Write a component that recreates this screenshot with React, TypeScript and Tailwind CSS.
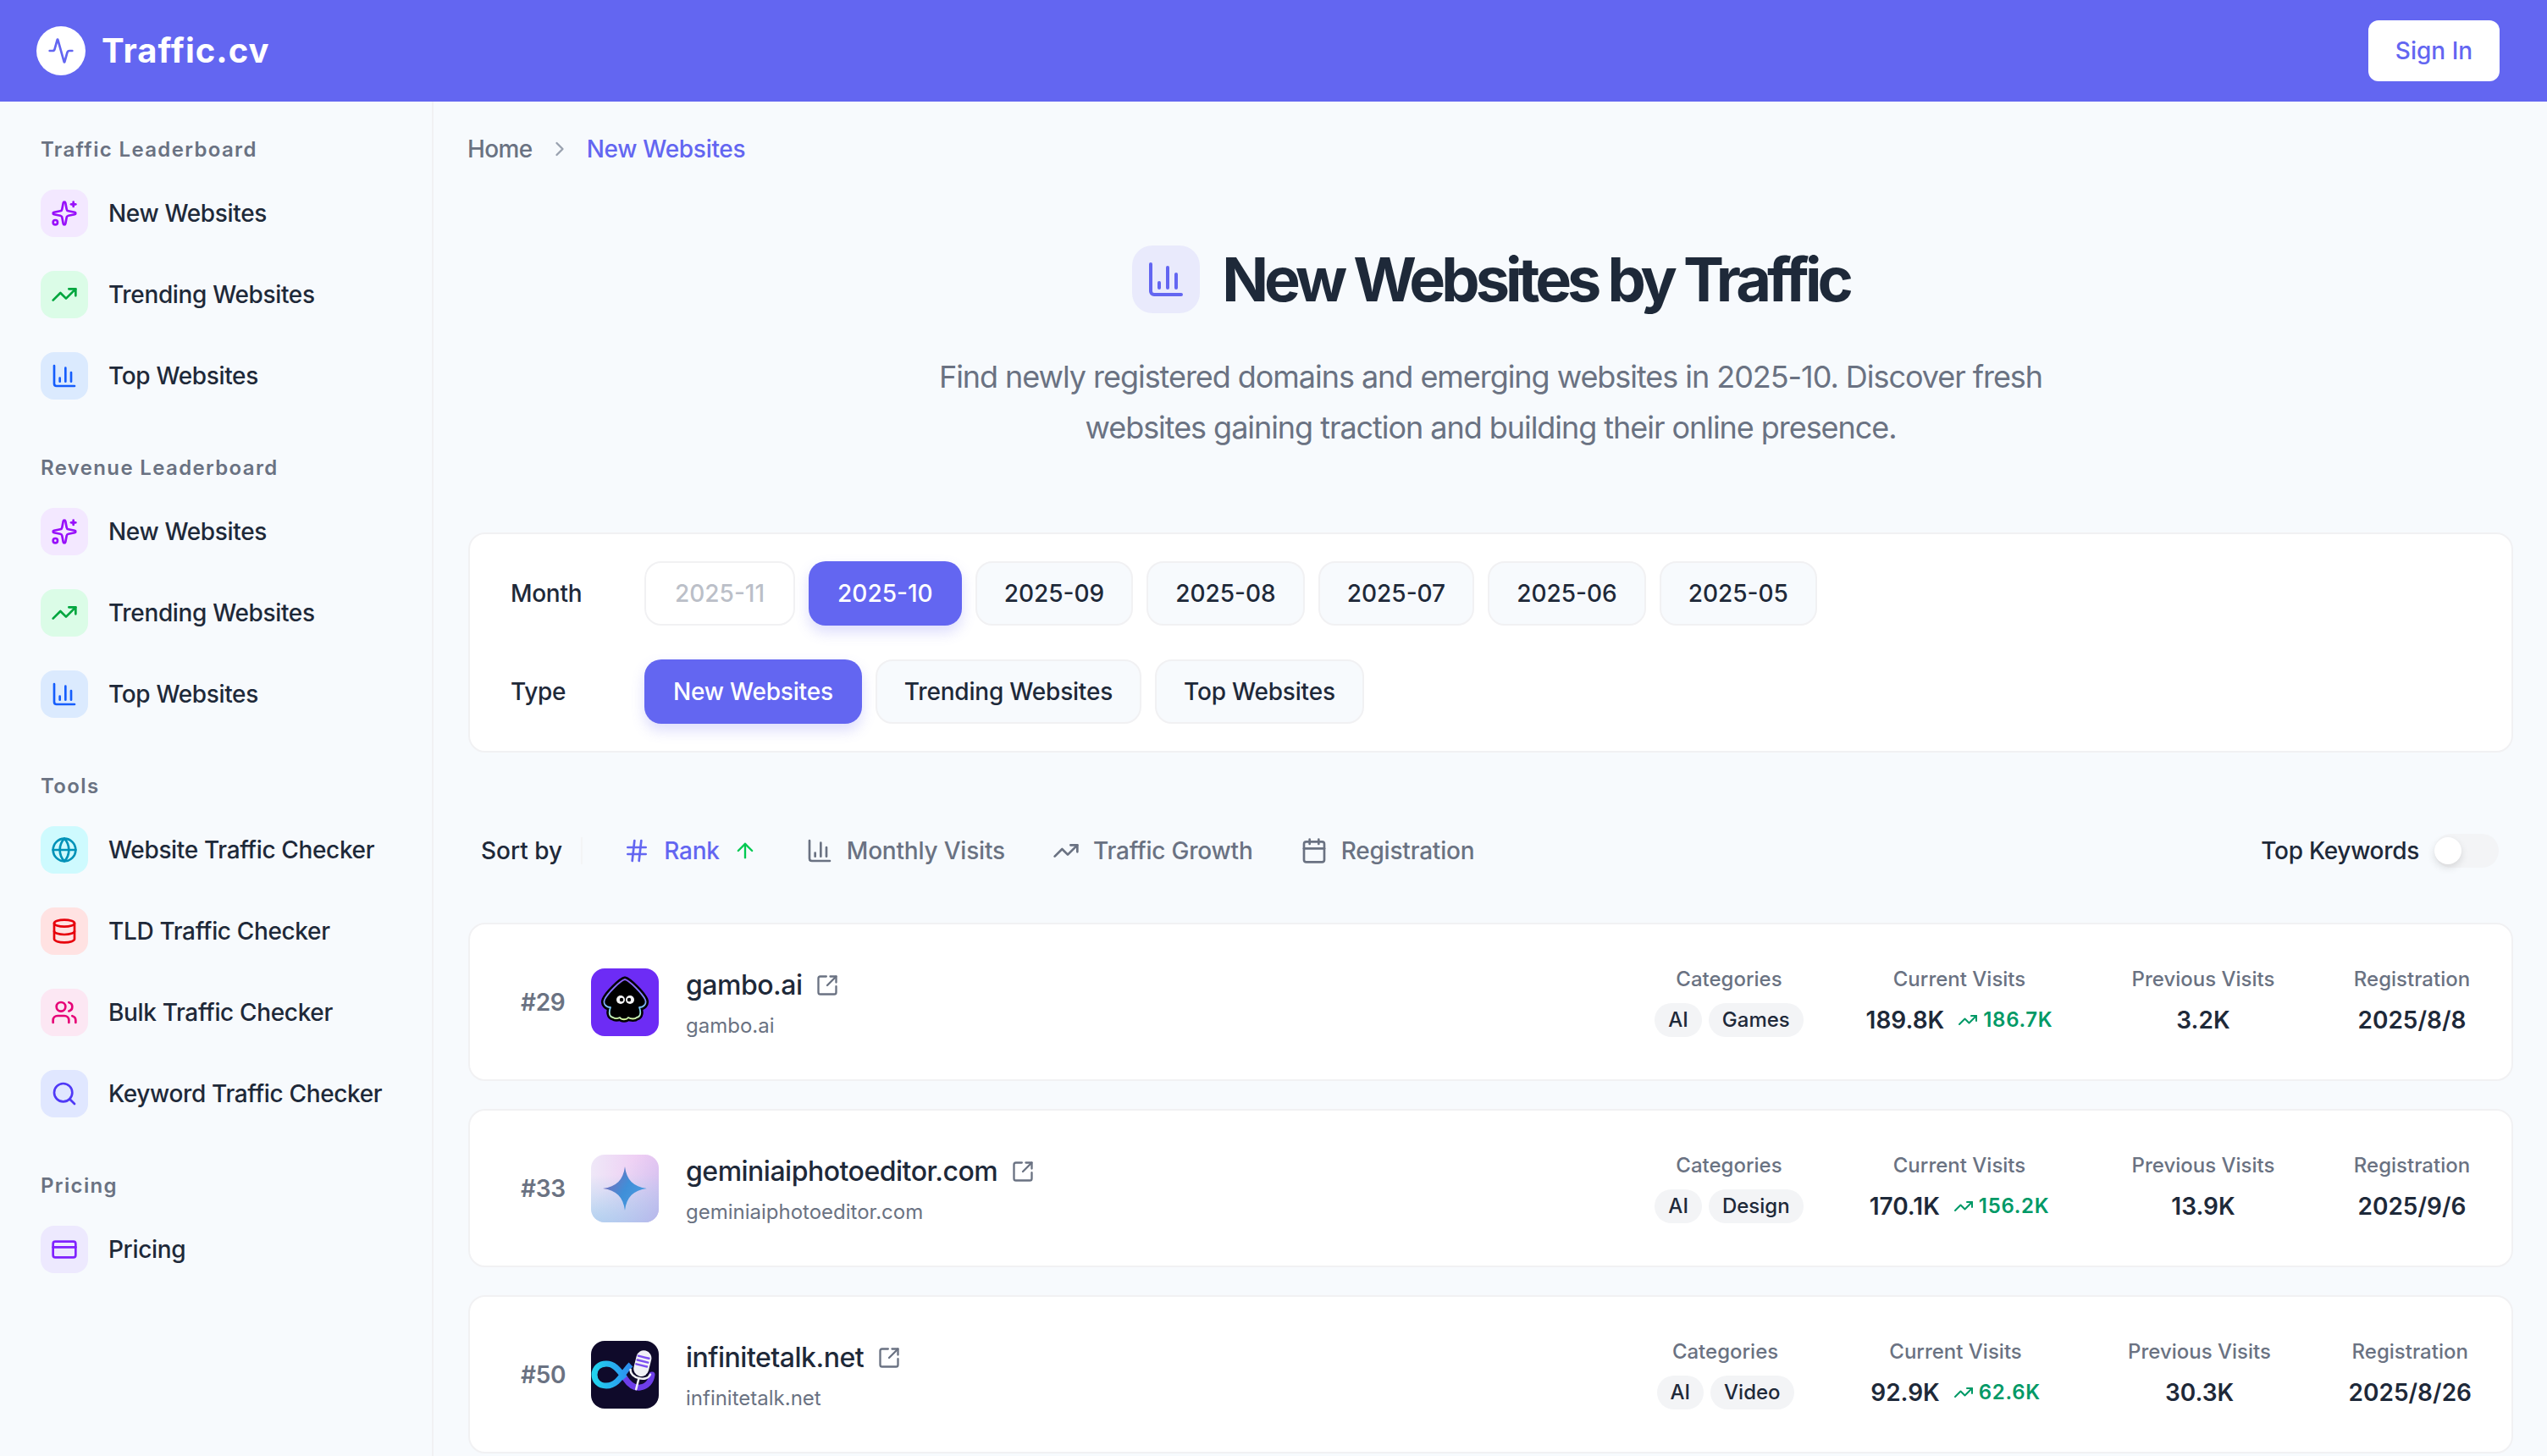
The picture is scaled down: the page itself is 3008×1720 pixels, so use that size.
import {
  Activity,
  ArrowUp,
  Calendar,
  ChartColumn,
  ChevronRight,
  CreditCard,
  Database,
  Globe,
  Hash,
  Search,
  Sparkles,
  SquareArrowOutUpRight,
  TrendingUp,
  Users,
} from "lucide-react";
import React from "react";

const sidebarSections = [
  {
    title: "Traffic Leaderboard",
    items: [
      { label: "New Websites", icon: Sparkles, box: "bg-purple-100", color: "text-purple-600" },
      { label: "Trending Websites", icon: TrendingUp, box: "bg-green-100", color: "text-green-600" },
      { label: "Top Websites", icon: ChartColumn, box: "bg-blue-100", color: "text-blue-600" },
    ],
  },
  {
    title: "Revenue Leaderboard",
    items: [
      { label: "New Websites", icon: Sparkles, box: "bg-purple-100", color: "text-purple-600" },
      { label: "Trending Websites", icon: TrendingUp, box: "bg-green-100", color: "text-green-600" },
      { label: "Top Websites", icon: ChartColumn, box: "bg-blue-100", color: "text-blue-600" },
    ],
  },
  {
    title: "Tools",
    items: [
      { label: "Website Traffic Checker", icon: Globe, box: "bg-cyan-100", color: "text-cyan-600" },
      { label: "TLD Traffic Checker", icon: Database, box: "bg-red-100", color: "text-red-600" },
      { label: "Bulk Traffic Checker", icon: Users, box: "bg-pink-100", color: "text-pink-600" },
      { label: "Keyword Traffic Checker", icon: Search, box: "bg-indigo-100", color: "text-indigo-600" },
    ],
  },
  {
    title: "Pricing",
    items: [{ label: "Pricing", icon: CreditCard, box: "bg-violet-100", color: "text-violet-600" }],
  },
];

const months = ["2025-11", "2025-10", "2025-09", "2025-08", "2025-07", "2025-06", "2025-05"];
const types = ["New Websites", "Trending Websites", "Top Websites"];

const squidPath =
  "M40 13C35 14 19 30 16 37C14 42 18 46 23 46C21 51 21 57 26 58C29 60 32 59 34 58C36 61 42 61 44 58C47 60 52 60 54 58C59 57 59 51 57 46C62 46 66 42 64 37C61 30 45 14 40 13Z";

const GamboLogo = () => (
  <svg viewBox="0 0 80 80" className="h-full w-full">
    <defs>
      <linearGradient id="gamboEdge" x1="0" y1="0" x2="0" y2="1">
        <stop offset="0" stopColor="#8b5cf6" />
        <stop offset="0.5" stopColor="#818cf8" />
        <stop offset="0.75" stopColor="#7dd3fc" />
        <stop offset="1" stopColor="#d9f99d" />
      </linearGradient>
    </defs>
    <rect width="80" height="80" fill="#6d2cf5" />
    <path d={squidPath} fill="#000" stroke="#000" strokeWidth="7" strokeLinejoin="round" />
    <path d={squidPath} fill="#000" stroke="url(#gamboEdge)" strokeWidth="1.8" strokeLinejoin="round" />
    <circle cx="35" cy="37" r="5" fill="#f4f4f5" />
    <circle cx="46" cy="37" r="5" fill="#f4f4f5" />
    <circle cx="36" cy="37" r="2.2" fill="#000" />
    <circle cx="45" cy="37" r="2.2" fill="#000" />
  </svg>
);

const GeminiLogo = () => (
  <svg viewBox="0 0 80 80" className="h-full w-full">
    <defs>
      <linearGradient id="geminiBg" x1="0" y1="0" x2="1" y2="0">
        <stop offset="0" stopColor="#efe8f8" />
        <stop offset="1" stopColor="#eec3f2" />
      </linearGradient>
      <linearGradient id="geminiFade" x1="0" y1="0" x2="1" y2="1">
        <stop offset="0.35" stopColor="#b5d3f0" stopOpacity="0" />
        <stop offset="1" stopColor="#b8aeea" stopOpacity="0.8" />
      </linearGradient>
      <linearGradient id="geminiLow" x1="0" y1="0" x2="0" y2="1">
        <stop offset="0.3" stopColor="#b4d3f0" stopOpacity="0" />
        <stop offset="1" stopColor="#b4d3f0" stopOpacity="1" />
      </linearGradient>
      <linearGradient id="geminiStar" x1="0" y1="0" x2="1" y2="0.6">
        <stop offset="0" stopColor="#8e62b0" />
        <stop offset="0.6" stopColor="#3f8fd8" />
        <stop offset="1" stopColor="#4a9be0" />
      </linearGradient>
    </defs>
    <rect width="80" height="80" fill="url(#geminiBg)" />
    <rect width="80" height="80" fill="url(#geminiLow)" />
    <rect width="80" height="80" fill="url(#geminiFade)" />
    <path
      d="M40 14C42 30 50 38 66 40C50 42 42 50 40 66C38 50 30 42 14 40C30 38 38 30 40 14Z"
      fill="url(#geminiStar)"
    />
  </svg>
);

const InfiniteTalkLogo = () => (
  <svg viewBox="0 0 80 80" className="h-full w-full">
    <defs>
      <linearGradient id="talkLoop" x1="0" y1="0" x2="1" y2="0">
        <stop offset="0" stopColor="#22d3ee" />
        <stop offset="1" stopColor="#2d8cf0" />
      </linearGradient>
    </defs>
    <rect width="80" height="80" fill="#0f0a2a" />
    <path
      d="M40 44C46 53 52 56 58 55C66 54 71 48 72 40"
      fill="none"
      stroke="#6d3ee8"
      strokeWidth="7"
      strokeLinecap="round"
    />
    <path
      d="M47 28C38 36 33 53 18 53C9 53 4 47 4 40C4 32 10 27 18 27C28 27 33 35 40 44"
      fill="none"
      stroke="url(#talkLoop)"
      strokeWidth="7"
    />
    <g transform="rotate(14 60 30)">
      <path d="M48 37C49 47 71 47 72 37" fill="none" stroke="#f1f1f6" strokeWidth="2.5" strokeLinecap="round" />
      <path d="M60 45V58" stroke="#f1f1f6" strokeWidth="2.5" strokeLinecap="round" />
      <rect x="51" y="11" width="18" height="31" rx="9" fill="#f1f1f6" />
      <path d="M53 19H66M53 24H66M53 29H66" stroke="#7c4ff0" strokeWidth="2.4" strokeLinecap="round" />
    </g>
  </svg>
);

const sites = [
  {
    rank: "#29",
    name: "gambo.ai",
    logo: <GamboLogo />,
    tags: ["AI", "Games"],
    current: "189.8K",
    growth: "186.7K",
    previous: "3.2K",
    registered: "2025/8/8",
  },
  {
    rank: "#33",
    name: "geminiaiphotoeditor.com",
    logo: <GeminiLogo />,
    tags: ["AI", "Design"],
    current: "170.1K",
    growth: "156.2K",
    previous: "13.9K",
    registered: "2025/9/6",
  },
  {
    rank: "#50",
    name: "infinitetalk.net",
    logo: <InfiniteTalkLogo />,
    tags: ["AI", "Video"],
    current: "92.9K",
    growth: "62.6K",
    previous: "30.3K",
    registered: "2025/8/26",
  },
];

const Sidebar = () => (
  <aside className="flex w-[512px] shrink-0 flex-col border-r-2 border-[#f1f1f3] pl-12 pt-[41px]">
    {sidebarSections.map((section) => (
      <div key={section.title} className="mb-[45px] flex flex-col">
        <h3 className="mb-[11px] h-[32px] text-[24px] font-semibold leading-[32px] tracking-[1.35px] text-gray-500">
          {section.title}
        </h3>
        {section.items.map((item) => (
          <div
            key={item.label}
            className="flex h-[96px] items-center gap-[24px] text-[28px] font-medium tracking-[-0.35px] text-gray-800"
          >
            <span className={`flex h-14 w-14 items-center justify-center rounded-2xl ${item.box}`}>
              <item.icon className={`h-8 w-8 ${item.color}`} />
            </span>
            {item.label}
          </div>
        ))}
      </div>
    ))}
  </aside>
);

const FilterButton = ({ label, active, disabled }: { label: string; active?: boolean; disabled?: boolean }) => {
  let tone = "border-2 border-[#f1f1f3] bg-[#f7fafd] px-[32px] text-gray-800";
  if (active) tone = "bg-[#6366f1] px-[34px] text-white shadow-[0_8px_16px_rgba(99,102,241,0.22)]";
  if (disabled) tone = "border-2 border-[#f1f1f3] bg-white px-[34px] text-[#bbbfc8]";
  return <span className={`flex h-[76px] items-center rounded-[20px] text-[28px] font-medium ${tone}`}>{label}</span>;
};

const SortOption = ({ icon: Icon, label, active }: { icon: typeof Hash; label: string; active?: boolean }) => (
  <span
    className={`flex items-center gap-4 px-[28px] text-[28px] font-medium tracking-[-0.2px] ${
      active ? "text-[#6366f1]" : "text-gray-500"
    }`}
  >
    <Icon className="h-8 w-8" />
    {label}
    {active && <ArrowUp className="mr-[2px] h-7 w-7 text-green-500" />}
  </span>
);

const Stat = ({ label, width, children }: { label: string; width: string; children: React.ReactNode }) => (
  <div className={`flex flex-col items-center gap-[10px] ${width}`}>
    <span className="whitespace-nowrap text-[24px] font-medium leading-[36px] text-gray-500">{label}</span>
    <div className="flex h-[40px] items-center gap-2 whitespace-nowrap text-[28px] font-semibold text-gray-800">
      {children}
    </div>
  </div>
);

const SiteCard = ({ site }: { site: (typeof sites)[number] }) => (
  <div className="flex h-[187px] items-center rounded-[20px] border-2 border-[#f1f1f3] bg-white pl-[60px] pr-[47px]">
    <span className="w-[83px] text-[28px] font-semibold tracking-[-0.3px] text-gray-500">{site.rank}</span>
    <span className="h-20 w-20 shrink-0 overflow-hidden rounded-2xl">{site.logo}</span>
    <div className="ml-8 mt-1 flex flex-col gap-[8px]">
      <div className="flex items-center gap-4">
        <span className="text-[32px] font-medium leading-[44px] tracking-[-0.5px] text-gray-800">{site.name}</span>
        <SquareArrowOutUpRight className="h-7 w-7 text-gray-500" />
      </div>
      <span className="text-[24px] font-normal leading-[36px] text-gray-500">{site.name}</span>
    </div>
    <div className="mb-1 ml-auto flex gap-12">
      <Stat label="Categories" width="w-[224px]">
        {site.tags.map((tag) => (
          <span key={tag} className="rounded-full bg-gray-100 px-4 py-[2px] text-[24px] font-medium leading-[36px]">
            {tag}
          </span>
        ))}
      </Stat>
      <Stat label="Current Visits" width="w-[224px]">
        {site.current}
        <span className="ml-2 flex items-center gap-1.5 text-[24px] font-semibold tracking-[0.7px] text-emerald-600">
          <TrendingUp className="h-6 w-6" />
          {site.growth}
        </span>
      </Stat>
      <Stat label="Previous Visits" width="w-[256px]">
        {site.previous}
      </Stat>
      <Stat label="Registration" width="min-w-[141px]">
        {site.registered}
      </Stat>
    </div>
  </div>
);

export default function App() {
  return (
    <div className="flex h-[1720px] w-[3008px] flex-col overflow-hidden bg-[#f7fafd] font-[Inter,sans-serif]">
      <header className="flex h-[120px] shrink-0 items-center justify-between bg-[#6366f1] pl-[43px] pr-[56px]">
        <div className="flex items-center gap-[19px]">
          <span className="flex h-[58px] w-[58px] items-center justify-center rounded-full bg-white">
            <Activity className="h-8 w-8 text-[#6366f1]" />
          </span>
          <span className="text-[40px] font-bold tracking-[1px] text-white">Traffic.cv</span>
        </div>
        <span className="flex h-[72px] w-[155px] items-center justify-center rounded-xl bg-white text-[28px] font-medium text-[#6366f1]">
          Sign In
        </span>
      </header>

      <div className="flex flex-1">
        <Sidebar />

        <main className="flex flex-1 flex-col pl-[41px] pr-[40px]">
          <nav className="-ml-[1px] mt-[38px] flex h-[36px] items-center gap-[18px] text-[28px] font-medium tracking-[-0.3px] text-gray-500">
            <span className="tracking-[-0.6px]">Home</span>
            <ChevronRight className="h-7 w-7 text-gray-400" />
            <span className="text-[#6366f1]">New Websites</span>
          </nav>

          <section className="mt-[96px] flex flex-col items-center">
            <div className="flex items-center gap-[26px]">
              <span className="flex h-20 w-20 items-center justify-center rounded-3xl bg-[#e9eafc]">
                <ChartColumn className="h-12 w-12 text-[#6366f1]" />
              </span>
              <h1 className="text-[72px] font-bold leading-[80px] tracking-[-5px] text-gray-800">
                New Websites by Traffic
              </h1>
            </div>
            <p className="mt-[45px] w-[1340px] text-center text-[36px] leading-[60px] tracking-[-1.05px] text-gray-500">
              Find newly registered domains and emerging websites in 2025-10. Discover fresh websites gaining traction
              and building their online presence.
            </p>
          </section>

          <section className="mt-[94px] flex flex-col gap-10 rounded-[20px] border-2 border-[#f1f1f3] bg-white py-8 pl-12 pr-8">
            <div className="flex items-center">
              <span className="w-[158px] text-[28px] font-medium tracking-[-0.3px] text-gray-800">Month</span>
              <div className="flex gap-4">
                {months.map((month) => (
                  <FilterButton key={month} label={month} active={month === "2025-10"} disabled={month === "2025-11"} />
                ))}
              </div>
            </div>
            <div className="flex items-center">
              <span className="w-[158px] text-[28px] font-medium tracking-[-0.3px] text-gray-800">Type</span>
              <div className="flex gap-4 tracking-[-0.2px]">
                {types.map((type) => (
                  <FilterButton key={type} label={type} active={type === "New Websites"} />
                ))}
              </div>
            </div>
          </section>

          <section className="mt-[96px] flex h-[40px] items-center pl-[15px] pr-[17px]">
            <span className="text-[28px] font-medium text-gray-800">Sort by</span>
            <span className="ml-[22px] mr-[20px] h-8 w-[2px] bg-gray-100" />
            <SortOption icon={Hash} label="Rank" active />
            <SortOption icon={ChartColumn} label="Monthly Visits" />
            <SortOption icon={TrendingUp} label="Traffic Growth" />
            <SortOption icon={Calendar} label="Registration" />
            <span className="ml-auto text-[28px] font-medium tracking-[-0.3px] text-gray-800">Top Keywords</span>
            <span className="ml-[18px] flex h-10 w-[76px] items-center rounded-full bg-gray-100">
              <span className="h-8 w-8 rounded-full bg-white shadow-[0_4px_10px_rgba(0,0,0,0.12)]" />
            </span>
          </section>

          <section className="mt-[65px] flex flex-col gap-[33px]">
            {sites.map((site) => (
              <SiteCard key={site.rank} site={site} />
            ))}
          </section>
        </main>
      </div>
    </div>
  );
}
